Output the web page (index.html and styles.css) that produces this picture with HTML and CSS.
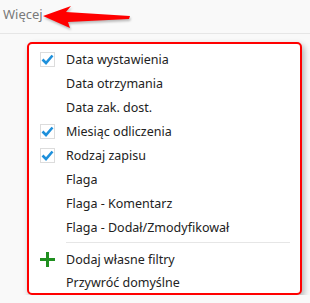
FILE: index.html
```html
<!DOCTYPE html>
<html lang="pl">

<head>
    <meta charset="UTF-8">
    <title>Więcej</title>
    <link rel="stylesheet" href="styles.css">
</head>

<body>
    <div class="toolbar">
        <span class="more">Więcej</span>
        <svg class="arrow" width="100" height="34" viewBox="0 0 100 34">
            <polygon points="3,16 31,6 26,12 90,16 89,19 28,22 30,28" fill="#ff0000" />
        </svg>
    </div>

    <div class="menu">
        <div class="item"><span class="check on"></span>Data wystawienia</div>
        <div class="item"><span class="check"></span>Data otrzymania</div>
        <div class="item"><span class="check"></span>Data zak. dost.</div>
        <div class="item"><span class="check on"></span>Miesiąc odliczenia</div>
        <div class="item"><span class="check on"></span>Rodzaj zapisu</div>
        <div class="item"><span class="check"></span>Flaga</div>
        <div class="item"><span class="check"></span>Flaga - Komentarz</div>
        <div class="item"><span class="check"></span>Flaga - Dodał/Zmodyfikował</div>
        <div class="separator"></div>
        <div class="item">
            <span class="icon">
                <svg width="15" height="15" viewBox="0 0 15 15">
                    <rect x="6" y="0" width="3" height="15" fill="#1f8f1f" />
                    <rect x="0" y="6" width="15" height="3" fill="#1f8f1f" />
                </svg>
            </span>Dodaj własne filtry
        </div>
        <div class="item last"><span class="icon"></span>Przywróć domyślne</div>
    </div>
</body>

</html>
```

FILE: styles.css
```css
body {
    margin: 0;
    padding: 0;
    background-color: #f9f9f9;
    font-family: "Noto Sans", "Open Sans", sans-serif;
    color: #222;
}

.toolbar {
    position: relative;
    height: 33px;
    border-bottom: 1px solid #e6e6e6;
}

.more {
    display: inline-block;
    padding: 5px 0 0 3px;
    font-size: 13px;
    color: #7a7a7a;
}

.arrow {
    position: absolute;
    left: 40px;
    top: 0;
    filter: drop-shadow(1px 2px 1px rgba(0, 0, 0, 0.25));
}

.menu {
    width: 271px;
    margin: 8px 0 0 27px;
    padding: 3px 0 0 0;
    background-color: #fff;
    border: 2px solid #f00;
    border-radius: 5px;
    box-shadow: 2px 3px 6px rgba(0, 0, 0, 0.3);
}

.item {
    display: flex;
    align-items: center;
    height: 24px;
    padding-left: 11px;
    font-size: 12.5px;
}

.item.last {
    height: 22px;
}

.check,
.icon {
    display: inline-block;
    width: 15px;
    height: 15px;
    margin-right: 11px;
    box-sizing: border-box;
}

.check.on {
    border: 1px solid #dcdcdc;
    background: url("data:image/svg+xml,%3Csvg xmlns='http://www.w3.org/2000/svg' width='13' height='13' viewBox='0 0 13 13'%3E%3Cpath d='M1.5 6.5 L5 10 L11.5 2.5' fill='none' stroke='%231e90db' stroke-width='2.6'/%3E%3C/svg%3E") center no-repeat;
}

.separator {
    height: 1px;
    margin: 3px 10px 4px 37px;
    background-color: #e6e6e6;
}
```
